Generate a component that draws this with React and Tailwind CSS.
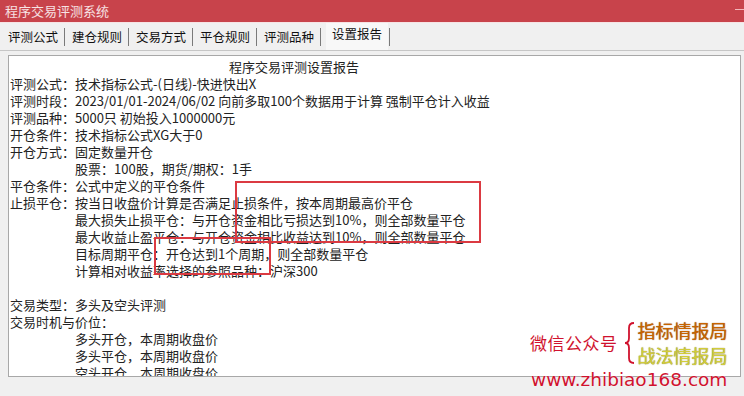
import React from "react";

const tabs = ["评测公式", "建仓规则", "交易方式", "平仓规则", "评测品种"];

// one report line: label column + value, or an indented value
function Row({ label, children }) {
  return (
    <div className="flex h-[17px] items-center whitespace-nowrap">
      <span className="w-[65px] shrink-0">{label}</span>
      <span>{children}</span>
    </div>
  );
}

function Line({ children }) {
  return <div className="flex h-[17px] items-center whitespace-nowrap">{children}</div>;
}

export default function App() {
  return (
    <div
      className="relative w-[744px] h-[396px] overflow-hidden bg-[#f0f0f0] text-[#222]"
      style={{ fontFamily: '"Noto Sans CJK SC", "Noto Sans", sans-serif' }}
    >
      {/* title bar */}
      <div className="h-[22px] bg-[#c8434b] flex items-center pl-[5px] text-[13px] text-white/85 relative">
        程序交易评测系统
        <span className="absolute right-0 top-[9px] w-[9px] h-[1px] bg-[#f3b8bb]" />
      </div>

      {/* tab strip */}
      <div className="h-[29px] border-t border-[#f7e3e4] border-b border-b-[#c6c6c6] flex items-end pl-[8px] text-[12.5px] text-[#111]">
        {tabs.map((t) => (
          <div key={t} className="flex items-center h-[27px]">
            <span className="w-[50px] pt-[1px]">{t}</span>
            <span className="w-[1px] h-[18px] bg-[#7a7a7a] ml-[6px] mr-[7px]" />
          </div>
        ))}
        <div className="flex items-center h-[27px]">
          <span className="ml-[-2px] h-[27px] bg-[#f8f8f8] px-[6px] flex items-center pb-[5px]">设置报告</span>
          <span className="w-[1px] h-[18px] bg-[#7a7a7a] ml-[1px]" />
        </div>
      </div>

      {/* report panel */}
      <div className="mt-[4px] ml-[8px] mr-[3px] h-[322px] bg-white border border-[#a8a8a8] relative overflow-hidden">
        <div className="pl-[1px] pt-[2px] text-[13px] leading-[17px]">
          <div className="h-[17px] flex items-center pl-[219px]">程序交易评测设置报告</div>
          <Row label="评测公式：">技术指标公式-(日线)-快进快出X</Row>
          <Row label="评测时段：">2023/01/01-2024/06/02 向前多取100个数据用于计算 强制平仓计入收益</Row>
          <Row label="评测品种：">5000只 初始投入1000000元</Row>
          <Row label="开仓条件：">技术指标公式XG大于0</Row>
          <Row label="开仓方式：">固定数量开仓</Row>
          <Row label="">股票：100股，期货/期权：1手</Row>
          <Row label="平仓条件：">公式中定义的平仓条件</Row>
          <Row label="止损平仓：">按当日收盘价计算是否满足止损条件，按本周期最高价平仓</Row>
          <Row label="">最大损失止损平仓：与开仓资金相比亏损达到10%，则全部数量平仓</Row>
          <Row label="">最大收益止盈平仓：与开仓资金相比收益达到10%，则全部数量平仓</Row>
          <Row label="">目标周期平仓：开仓达到1个周期，则全部数量平仓</Row>
          <Row label="">计算相对收益率选择的参照品种：沪深300</Row>
          <Line />
          <Row label="交易类型：">多头及空头评测</Row>
          <Line>交易时机与价位：</Line>
          <Row label="">多头开仓，本周期收盘价</Row>
          <Row label="">多头平仓，本周期收盘价</Row>
          <Row label="">空头开仓，本周期收盘价</Row>
        </div>

        {/* annotation boxes */}
        <div className="absolute left-[226px] top-[125px] w-[246px] h-[62px] border-2 border-[#db3a42]" />
        <div className="absolute left-[145px] top-[181px] w-[117px] h-[38px] border-2 border-[#db3a42]" />
      </div>

      {/* watermark */}
      <div className="absolute left-[530px] top-[318px] flex items-center">
        <span
          className="text-[17px] text-[#d0122e] tracking-[0.5px] [text-shadow:0_0_1px_#fff]"
          style={{ fontFamily: '"Noto Sans CJK SC", sans-serif' }}
        >
          微信公众号
        </span>
        <svg width="12" height="44" viewBox="0 0 12 44" className="ml-[6px]">
          <path
            d="M10 2 Q5 2 5 7 L5 17 Q5 22 1 22 Q5 22 5 27 L5 37 Q5 42 10 42"
            fill="none"
            stroke="#d0122e"
            strokeWidth="1.8"
          />
        </svg>
        <div className="flex flex-col ml-[2px] text-[18px] leading-[25px]">
          <span className="text-[#c86400] [text-shadow:0_0_1px_#7a3a00]">指标情报局</span>
          <span className="text-[#d2cc3a] [text-shadow:0_0_1px_#6f6a10]">战法情报局</span>
        </div>
      </div>
      <div
        className="absolute left-[531px] top-[368px] text-[18.5px] leading-[24px] text-[#d0122e] [text-shadow:0_0_1px_#fff]"
        style={{ fontFamily: '"DejaVu Sans", sans-serif' }}
      >
        www.zhibiao168.com
      </div>
    </div>
  );
}
